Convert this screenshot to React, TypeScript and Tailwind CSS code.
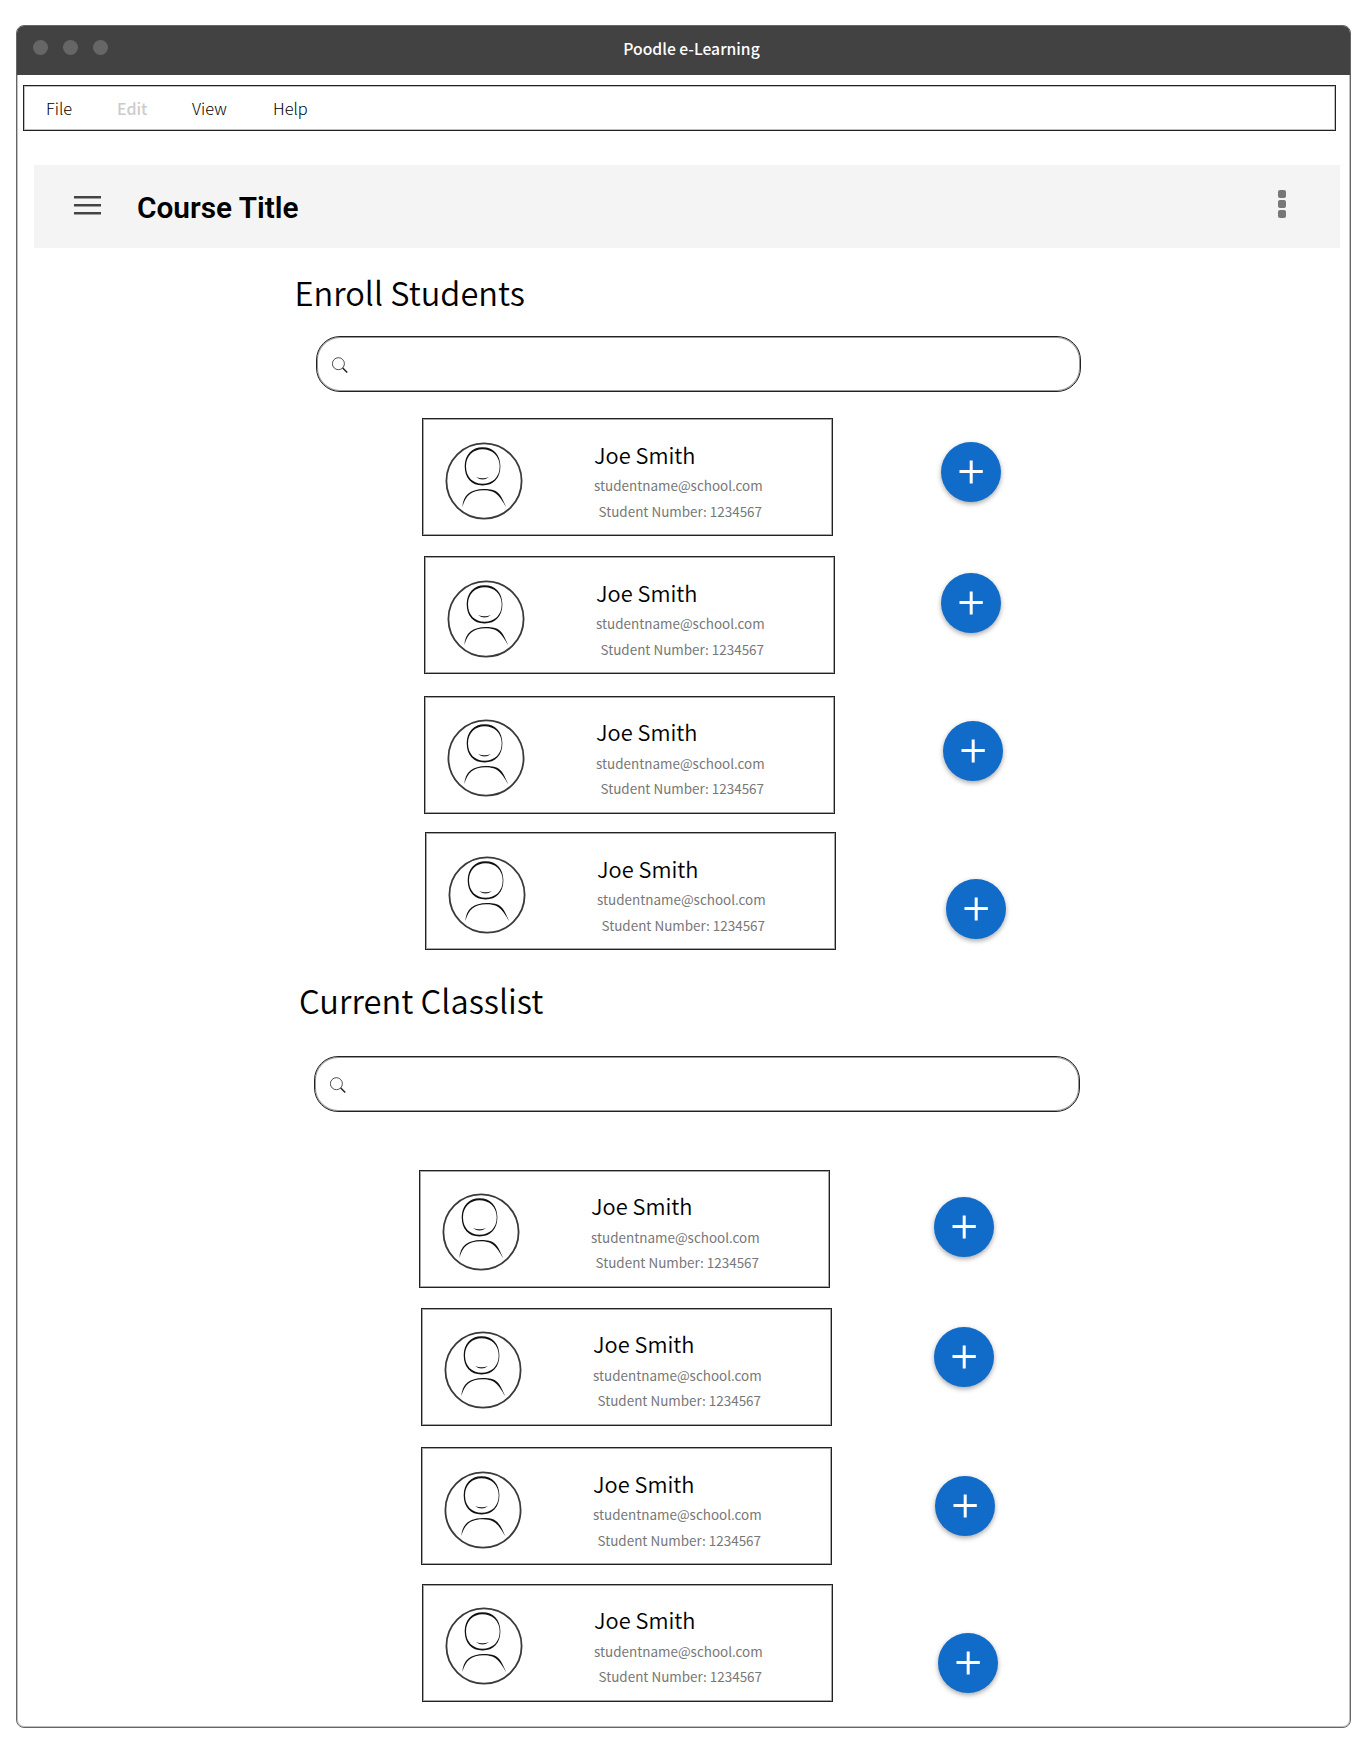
const cjk = "font-['Noto_Sans_CJK_SC','Noto_Sans',sans-serif]";

function Avatar() {
  return (
    <svg className="-mt-[1.5px] h-[80px] w-[80px] shrink-0" viewBox="0 0 80 80" fill="none">
      <circle cx="40" cy="40" r="37.6" stroke="#3a3a3a" strokeWidth="1.8" />
      <path fillRule="evenodd" fill="#111" d="M38.5 6.200 C49.5 6.200 56.400 13.700 56.400 25.200 C56.400 37.200 49.5 44.400 38.5 44.400 C27.5 44.400 20.700 37.200 20.700 25.200 C20.700 13.700 28 6.200 38.5 6.200 Z M38.5 8.200 C29.5 8.200 22 14.700 22 25.200 C22 36.200 29 42.700 38.5 42.700 C48.5 42.700 55.700 36.200 55.700 25.200 C55.700 14.700 48 8.200 38.5 8.200 Z" />
      <path fill="#222" d="M32 36 Q38.5 38.600 45 36 Q38.5 41 32 36 Z" />
      <path fill="#111" d="M18.400 66 C18.800 54 27 47.900 40 47.900 C53 47.900 56 51 62.200 66.200 C54.600 53.400 52 49.700 40 49.200 C28 49 21.500 54 18.400 66 Z" />
    </svg>
  );
}

function StudentCard({ className, raised = false }: { className: string; raised?: boolean }) {
  return (
    <article className={`flex h-[118px] w-[411px] shrink-0 items-start border border-[#222] pl-[21px] shadow-[inset_0_0_0_1px_rgba(0,0,0,0.35)] ${raised ? "pt-[22px]" : "pt-[23px]"} ${className}`}>
      <Avatar />
      <div className="-mt-[3px] ml-[70px] flex flex-col whitespace-nowrap">
        <h3 className="h-[32px] text-[21.8px] leading-[32px] font-[350] text-black">Joe Smith</h3>
        <p className={`h-[20px] text-[13.45px] leading-[20px] text-[#777] ${raised ? "mt-[5px] mb-[5px]" : "mt-[4px] mb-[6px]"}`}>studentname@school.com</p>
        <p className="ml-[4.500px] h-[20px] text-[13.45px] leading-[20px] text-[#777]">Student Number: 1234567</p>
      </div>
    </article>
  );
}

function AddButton({ className }: { className: string }) {
  return (
    <button
      aria-label="Add student"
      className={`flex h-[60px] w-[60px] shrink-0 items-center justify-center rounded-full bg-[#116bc9] shadow-[0_2px_5px_rgba(0,0,0,0.35)] ${className}`}
    >
      <svg width="24" height="24" viewBox="0 0 24 24" stroke="#fff" strokeWidth="3">
        <path d="M12.200 .5V23.500M.5 11.500H23.800" />
      </svg>
    </button>
  );
}

function SearchBox({ className }: { className: string }) {
  return (
    <div className={`flex h-[56px] items-start rounded-[24px] border border-[#222] shadow-[inset_0_0_0_1px_rgba(0,0,0,0.4)] pl-[15px] pt-[20px] ${className}`}>
      <svg width="17" height="17" viewBox="0 0 17 17" fill="none" stroke="#222">
        <circle cx="6.400" cy="6.700" r="6" strokeWidth=".8" />
        <path d="M10.700 11L15.200 15.500" strokeWidth="1.500" />
      </svg>
    </div>
  );
}

export default function App() {
  return (
    <div className={`h-[1751px] w-[1366px] overflow-hidden bg-white pl-[16px] pt-[25px] ${cjk}`}>
      <div className="flex h-[1703px] w-[1335px] flex-col overflow-hidden rounded-[8px] border border-[#666] shadow-[inset_0_0_0_1px_rgba(0,0,0,0.25)]">
        <header className="relative flex h-[49px] shrink-0 items-center justify-center bg-[#424242] pb-[3px] pl-[16px]">
          <div className="absolute left-[16px] top-[14px] flex gap-[15px]">
            <i className="h-[15px] w-[15px] rounded-full bg-[#666]" />
            <i className="h-[15px] w-[15px] rounded-full bg-[#666]" />
            <i className="h-[15px] w-[15px] rounded-full bg-[#666]" />
          </div>
          <span className="text-[15.7px] font-medium text-white">Poodle e-Learning</span>
        </header>

        <nav className="ml-[6px] mt-[10px] flex h-[46px] w-[1313px] shrink-0 items-center border border-[#222] shadow-[inset_0_0_0_1px_rgba(0,0,0,0.25)] pt-px pl-[22px] text-[16.4px] font-light text-black">
          <span className="w-[71px]">File</span>
          <span className="mb-[2px] w-[75px] text-[16px] font-medium text-[#ccc]">Edit</span>
          <span className="w-[81px]">View</span>
          <span>Help</span>
        </nav>

        <div className="ml-[17px] mt-[34px] flex h-[83px] w-[1306px] shrink-0 items-center bg-[#f4f4f4] pl-[40px] pr-[54px]">
          <svg className="mb-[2px]" width="27" height="19" viewBox="0 0 27 19" fill="#444">
            <path d="M0 0h27v2.400H0zM0 8h27v2.400H0zM0 16h27v2.400H0z" />
          </svg>
          <h1 className="ml-[36px] mt-[3px] font-['Roboto',sans-serif] text-[29.8px] font-semibold text-black">Course Title</h1>
          <div className="mb-[5px] ml-auto flex flex-col gap-[2px]">
            <i className="h-[8px] w-[8px] rounded-[2px] bg-[#777]" />
            <i className="h-[8px] w-[8px] rounded-[2px] bg-[#777]" />
            <i className="h-[8px] w-[8px] rounded-[2px] bg-[#777]" />
          </div>
        </div>

        <section className="flex shrink-0 flex-col">
          <h2 className="ml-[277.5px] mt-[20px] h-[48px] text-[32.6px] leading-[48px] font-[350] text-black">Enroll Students</h2>
          <SearchBox className="ml-[299px] mt-[20px] w-[765px]" />
          <div className="flex h-[533px] items-start pt-[26px]">
            <div className="flex flex-col">
              <StudentCard className="ml-[405px]" />
              <StudentCard className="ml-[407px] mt-[20px]" />
              <StudentCard className="ml-[407px] mt-[22px]" raised />
              <StudentCard className="ml-[408px] mt-[18px]" />
            </div>
            <div className="ml-[105px] flex flex-col">
              <AddButton className="mt-[24px]" />
              <AddButton className="mt-[71px]" />
              <AddButton className="ml-[2px] mt-[88px]" />
              <AddButton className="ml-[5px] mt-[98px]" />
            </div>
          </div>
        </section>

        <section className="flex shrink-0 flex-col">
          <h2 className="ml-[282px] mt-[51px] h-[48px] text-[32.7px] leading-[48px] font-[350] text-black">Current Classlist</h2>
          <SearchBox className="ml-[297px] mt-[32px] w-[766px]" />
          <div className="flex items-start pt-[58px]">
            <div className="flex flex-col">
              <StudentCard className="ml-[402px]" raised />
              <StudentCard className="ml-[404px] mt-[20px]" raised />
              <StudentCard className="ml-[404px] mt-[21px]" />
              <StudentCard className="ml-[405px] mt-[19px]" raised />
            </div>
            <div className="ml-[101px] flex flex-col">
              <AddButton className="mt-[27px]" />
              <AddButton className="mt-[70px]" />
              <AddButton className="ml-[1px] mt-[89px]" />
              <AddButton className="ml-[4px] mt-[97px]" />
            </div>
          </div>
        </section>
      </div>
    </div>
  );
}
